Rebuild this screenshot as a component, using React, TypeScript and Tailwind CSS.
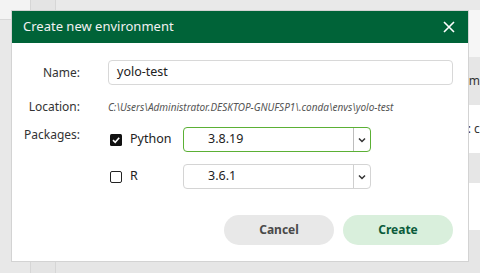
import React from "react";

function Chevron() {
  return (
    <svg width="8" height="6" viewBox="0 0 8 6" className="block">
      <polyline points="1,1.5 4,4.5 7,1.5" fill="none" stroke="#333" strokeWidth="1.5" />
    </svg>
  );
}

function Select({ value, active }: { value: string; active?: boolean }) {
  return (
    <div
      className={
        "flex h-[25px] w-[188px] rounded-[4px] border bg-white " +
        (active ? "border-[#5bb035]" : "border-[#d4d4d4]")
      }
    >
      <div className="flex flex-1 items-center pl-[24px] text-[12.5px] text-[#222]">{value}</div>
      <div className={"flex w-[17px] items-center justify-center border-l " + (active ? "border-[#bdbdbd]" : "border-[#cfcfcf]")}>
        <Chevron />
      </div>
    </div>
  );
}

function Checkbox({ checked }: { checked?: boolean }) {
  if (checked) {
    return (
      <div className="flex h-[12px] w-[12px] items-center justify-center rounded-[1.5px] bg-[#111]">
        <svg width="10" height="10" viewBox="0 0 10 10">
          <polyline points="2,5.2 4.2,7.3 8.2,2.8" fill="none" stroke="#fff" strokeWidth="1.6" />
        </svg>
      </div>
    );
  }
  return <div className="h-[12px] w-[12px] rounded-[2px] border-[1.5px] border-[#222] bg-white" />;
}

export default function App() {
  return (
    <div
      className="relative h-[273px] w-[480px] overflow-hidden bg-[#e6e6e6]"
      style={{ fontFamily: '"Noto Sans", "Open Sans", sans-serif' }}
    >
      {/* background app */}
      <div className="flex h-full w-full">
        <div className="flex w-[32px] flex-col border-r border-[#d6d6d6]">
          <div className="h-[20px] border-b border-[#d8d8d8] bg-[#f3f3f3]" />
          <div className="flex-1 bg-[#e8e8e8]" />
        </div>
        <div className="w-[25px] border-r border-[#d6d6d6] bg-[#e4e4e4]" />
        <div className="flex flex-1 flex-col">
          <div className="h-[10px] bg-[#e9e9e9]" />
          <div className="h-[47px] bg-[#f6f6f6]" />
          <div className="flex h-[48px] items-center bg-[#e6e6e6] pl-[413px] text-[12px] text-[#333] whitespace-nowrap">
            m
          </div>
          <div className="flex h-[48px] items-center bg-white pl-[412px] text-[12px] text-[#333] whitespace-nowrap">
            : c
          </div>
          <div className="h-[30px] bg-[#e6e6e6]" />
          <div className="h-[47px] bg-white" />
          <div className="h-[33px] bg-[#e6e6e6]" />
          <div className="flex-1 bg-[#e6e6e6]" />
        </div>
      </div>

      {/* dialog */}
      <div className="absolute left-[11px] top-[10px] flex h-[252px] w-[458px] flex-col border border-[#d3d3d3] bg-white">
        <div className="flex h-[32px] items-center justify-between bg-[#006338] pl-[11px] pr-[13px]">
          <span className="text-[13px] text-[#f2f2f2]">Create new environment</span>
          <svg width="12" height="12" viewBox="0 0 12 12">
            <path d="M1 1 L11 11 M11 1 L1 11" stroke="#fff" strokeWidth="1.6" />
          </svg>
        </div>

        <div className="flex flex-col pr-[15px] pt-[17px]">
          <div className="flex h-[25px] items-center">
            <div className="w-[68px] text-right text-[12px] text-[#333]">Name:</div>
            <div className="ml-[28px] flex h-[25px] flex-1 items-center rounded-[4px] border border-[#d8d8d8] pl-[8px] text-[12.5px] text-[#222]">
              yolo-test
            </div>
          </div>

          <div className="mt-[15px] flex h-[14px] items-center">
            <div className="w-[68px] text-right text-[12px] text-[#333]">Location:</div>
            <div className="ml-[28px] text-[10px] italic text-[#555] whitespace-nowrap">
              C:\Users\Administrator.DESKTOP-GNUFSP1\.conda\envs\yolo-test
            </div>
          </div>

          <div className="mt-[13px] flex items-start">
            <div className="w-[68px] text-right text-[12px] leading-[16px] text-[#333]">Packages:</div>
            <div className="ml-[30px] flex flex-col gap-[12px]">
              <div className="flex h-[25px] items-center">
                <div className="flex w-[73px] items-center gap-[8px]">
                  <Checkbox checked />
                  <span className="text-[12.5px] text-[#222]">Python</span>
                </div>
                <Select value="3.8.19" active />
              </div>
              <div className="flex h-[25px] items-center">
                <div className="flex w-[73px] items-center gap-[8px]">
                  <Checkbox />
                  <span className="text-[12.5px] text-[#222]">R</span>
                </div>
                <Select value="3.6.1" />
              </div>
            </div>
          </div>

          <div className="mt-[26px] flex justify-end gap-[9px]">
            <div className="flex h-[30px] w-[110px] items-center justify-center rounded-full bg-[#e8e8e8] text-[12px] font-bold text-[#4a4a4a]">
              Cancel
            </div>
            <div className="flex h-[30px] w-[110px] items-center justify-center rounded-full bg-[#d9efdc] text-[12px] font-bold text-[#0b5b3b]">
              Create
            </div>
          </div>
        </div>
      </div>
    </div>
  );
}
